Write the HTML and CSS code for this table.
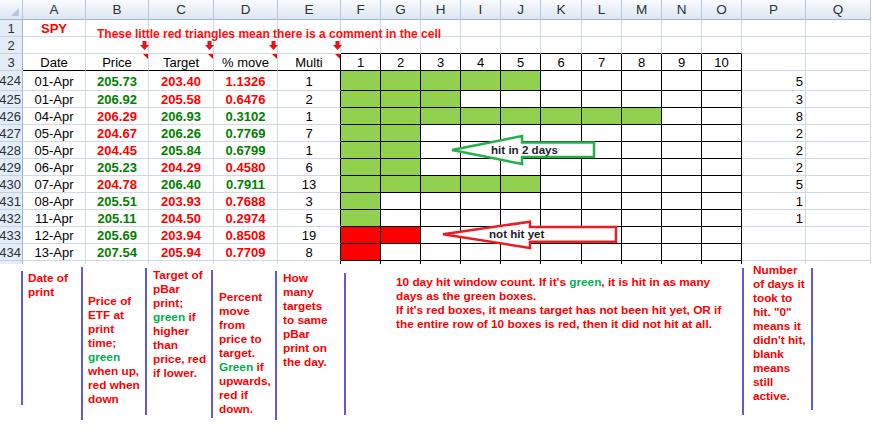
FILE: index.html
```html
<!DOCTYPE html>
<html>
<head>
<meta charset="utf-8">
<link rel="stylesheet" href="styles.css">
</head>
<body>
<div class="sheet">
  <div class="grid">
    <div class="ch corner"></div><div class="ch">A</div><div class="ch">B</div><div class="ch">C</div><div class="ch">D</div><div class="ch">E</div><div class="ch">F</div><div class="ch">G</div><div class="ch">H</div><div class="ch">I</div><div class="ch">J</div><div class="ch">K</div><div class="ch">L</div><div class="ch">M</div><div class="ch">N</div><div class="ch">O</div><div class="ch">P</div><div class="ch">Q</div><div class="x"></div>

    <div class="rh">1</div><div class="c spy">SPY</div><div class="c"></div><div class="c"></div><div class="c"></div><div class="c"></div><div class="c"></div><div class="c"></div><div class="c"></div><div class="c"></div><div class="c"></div><div class="c"></div><div class="c"></div><div class="c"></div><div class="c"></div><div class="c"></div><div class="c"></div><div class="c"></div><div class="x"></div>

    <div class="rh">2</div><div class="c"></div><div class="c"></div><div class="c"></div><div class="c"></div><div class="c"></div><div class="c tb"></div><div class="c tb"></div><div class="c tb"></div><div class="c tb"></div><div class="c tb"></div><div class="c tb"></div><div class="c tb"></div><div class="c tb"></div><div class="c tb"></div><div class="c tb"></div><div class="c"></div><div class="c"></div><div class="x"></div>

    <div class="rh">3</div><div class="c tb">Date</div><div class="c tb cm">Price</div><div class="c tb cm">Target</div><div class="c tb cm">% move</div><div class="c tb eb cm">Multi</div><div class="c box">1</div><div class="c box">2</div><div class="c box">3</div><div class="c box">4</div><div class="c box">5</div><div class="c box">6</div><div class="c box">7</div><div class="c box">8</div><div class="c box">9</div><div class="c box">10</div><div class="c"></div><div class="c"></div><div class="x"></div>

    <div class="rh rh-num">424</div><div class="c">01-Apr</div><div class="c b tg">205.73</div><div class="c b tr">203.40</div><div class="c b tr">1.1326</div><div class="c eb">1</div><div class="c box g"></div><div class="c box g"></div><div class="c box g"></div><div class="c box g"></div><div class="c box g"></div><div class="c box"></div><div class="c box"></div><div class="c box"></div><div class="c box"></div><div class="c box"></div><div class="c num">5</div><div class="c"></div><div class="x"></div>

    <div class="rh rh-num">425</div><div class="c">01-Apr</div><div class="c b tg">206.92</div><div class="c b tr">205.58</div><div class="c b tr">0.6476</div><div class="c eb">2</div><div class="c box g"></div><div class="c box g"></div><div class="c box g"></div><div class="c box"></div><div class="c box"></div><div class="c box"></div><div class="c box"></div><div class="c box"></div><div class="c box"></div><div class="c box"></div><div class="c num">3</div><div class="c"></div><div class="x"></div>

    <div class="rh rh-num">426</div><div class="c">04-Apr</div><div class="c b tr">206.29</div><div class="c b tg">206.93</div><div class="c b tg">0.3102</div><div class="c eb">1</div><div class="c box g"></div><div class="c box g"></div><div class="c box g"></div><div class="c box g"></div><div class="c box g"></div><div class="c box g"></div><div class="c box g"></div><div class="c box g"></div><div class="c box"></div><div class="c box"></div><div class="c num">8</div><div class="c"></div><div class="x"></div>

    <div class="rh rh-num">427</div><div class="c">05-Apr</div><div class="c b tr">204.67</div><div class="c b tg">206.26</div><div class="c b tg">0.7769</div><div class="c eb">7</div><div class="c box g"></div><div class="c box g"></div><div class="c box"></div><div class="c box"></div><div class="c box"></div><div class="c box"></div><div class="c box"></div><div class="c box"></div><div class="c box"></div><div class="c box"></div><div class="c num">2</div><div class="c"></div><div class="x"></div>

    <div class="rh rh-num">428</div><div class="c">05-Apr</div><div class="c b tr">204.45</div><div class="c b tg">205.84</div><div class="c b tg">0.6799</div><div class="c eb">1</div><div class="c box g"></div><div class="c box g"></div><div class="c box"></div><div class="c box"></div><div class="c box"></div><div class="c box"></div><div class="c box"></div><div class="c box"></div><div class="c box"></div><div class="c box"></div><div class="c num">2</div><div class="c"></div><div class="x"></div>

    <div class="rh rh-num">429</div><div class="c">06-Apr</div><div class="c b tg">205.23</div><div class="c b tr">204.29</div><div class="c b tr">0.4580</div><div class="c eb">6</div><div class="c box g"></div><div class="c box g"></div><div class="c box"></div><div class="c box"></div><div class="c box"></div><div class="c box"></div><div class="c box"></div><div class="c box"></div><div class="c box"></div><div class="c box"></div><div class="c num">2</div><div class="c"></div><div class="x"></div>

    <div class="rh rh-num">430</div><div class="c">07-Apr</div><div class="c b tr">204.78</div><div class="c b tg">206.40</div><div class="c b tg">0.7911</div><div class="c eb">13</div><div class="c box g"></div><div class="c box g"></div><div class="c box g"></div><div class="c box g"></div><div class="c box g"></div><div class="c box"></div><div class="c box"></div><div class="c box"></div><div class="c box"></div><div class="c box"></div><div class="c num">5</div><div class="c"></div><div class="x"></div>

    <div class="rh rh-num">431</div><div class="c">08-Apr</div><div class="c b tg">205.51</div><div class="c b tr">203.93</div><div class="c b tr">0.7688</div><div class="c eb">3</div><div class="c box g"></div><div class="c box"></div><div class="c box"></div><div class="c box"></div><div class="c box"></div><div class="c box"></div><div class="c box"></div><div class="c box"></div><div class="c box"></div><div class="c box"></div><div class="c num">1</div><div class="c"></div><div class="x"></div>

    <div class="rh rh-num">432</div><div class="c">11-Apr</div><div class="c b tg">205.11</div><div class="c b tr">204.50</div><div class="c b tr">0.2974</div><div class="c eb">5</div><div class="c box g"></div><div class="c box"></div><div class="c box"></div><div class="c box"></div><div class="c box"></div><div class="c box"></div><div class="c box"></div><div class="c box"></div><div class="c box"></div><div class="c box"></div><div class="c num">1</div><div class="c"></div><div class="x"></div>

    <div class="rh rh-num">433</div><div class="c">12-Apr</div><div class="c b tg">205.69</div><div class="c b tr">203.94</div><div class="c b tr">0.8508</div><div class="c eb">19</div><div class="c box r"></div><div class="c box r"></div><div class="c box"></div><div class="c box"></div><div class="c box"></div><div class="c box"></div><div class="c box"></div><div class="c box"></div><div class="c box"></div><div class="c box"></div><div class="c num"></div><div class="c"></div><div class="x"></div>

    <div class="rh rh-num">434</div><div class="c">13-Apr</div><div class="c b tg">207.54</div><div class="c b tr">205.94</div><div class="c b tr">0.7709</div><div class="c eb">8</div><div class="c box r"></div><div class="c box"></div><div class="c box"></div><div class="c box"></div><div class="c box"></div><div class="c box"></div><div class="c box"></div><div class="c box"></div><div class="c box"></div><div class="c box"></div><div class="c num"></div><div class="c"></div><div class="x"></div>

    <div class="rh st"></div><div class="c st"></div><div class="c st"></div><div class="c st"></div><div class="c st"></div><div class="c st eb"></div><div class="c st box"></div><div class="c st box"></div><div class="c st box"></div><div class="c st box"></div><div class="c st box"></div><div class="c st box"></div><div class="c st box"></div><div class="c st box"></div><div class="c st box"></div><div class="c st box"></div><div class="c st"></div><div class="c st"></div><div class="x"></div>
  </div>

  <div class="notes">
    <div class="note n1"><p>Date of<br>print</p></div>
    <div class="note n2"><p>Price of<br>ETF at<br>print<br>time;<br><span class="gr">green</span><br>when up,<br>red when<br>down</p></div>
    <div class="note n3"><p>Target of<br>pBar<br>print;<br><span class="gr">green</span> if<br>higher<br>than<br>price, red<br>if lower.</p></div>
    <div class="note n4"><p>Percent<br>move<br>from<br>price to<br>target.<br><span class="gr">Green</span> if<br>upwards,<br>red if<br>down.</p></div>
    <div class="note n5"><p>How<br>many<br>targets<br>to same<br>pBar<br>print on<br>the day.</p></div>
    <div class="note n6"><p>10 day hit window count. If it's <span class="gr">green</span>, it is hit in as many<br>days as the green boxes.<br>If it's red boxes, it means target has not been hit yet, OR if<br>the entire row of 10 boxes is red, then it did not hit at all.</p></div>
    <div class="note n7"><p>Number<br>of days it<br>took to<br>hit. "0"<br>means it<br>didn't hit,<br>blank<br>means<br>still<br>active.</p></div>
    <div class="note n8"></div>
  </div>

  <div class="callout">These little red triangles mean there is a comment in the cell</div>

  <svg class="down d1" width="9" height="9" viewBox="0 0 9 9"><polygon points="2.5,0 6.5,0 6.5,4 9,4 4.5,9 0,4 2.5,4" fill="#e81414"/></svg>
  <svg class="down d2" width="9" height="9" viewBox="0 0 9 9"><polygon points="2.5,0 6.5,0 6.5,4 9,4 4.5,9 0,4 2.5,4" fill="#e81414"/></svg>
  <svg class="down d3" width="9" height="9" viewBox="0 0 9 9"><polygon points="2.5,0 6.5,0 6.5,4 9,4 4.5,9 0,4 2.5,4" fill="#e81414"/></svg>
  <svg class="down d4" width="9" height="9" viewBox="0 0 9 9"><polygon points="2.5,0 6.5,0 6.5,4 9,4 4.5,9 0,4 2.5,4" fill="#e81414"/></svg>

  <div class="arrow arrow-green">
    <svg width="146" height="32" viewBox="0 0 146 32"><polygon points="2,16 72,2 72,8.5 144,8.5 144,23 72,23 72,30" fill="#fff" stroke="#22b14c" stroke-width="2.5"/></svg>
    <span class="arrow-text">hit in 2 days</span>
  </div>
  <div class="arrow arrow-red">
    <svg width="177" height="30" viewBox="0 0 177 30"><polygon points="2,14.3 89,1.7 89,7 175,7 175,21.7 89,21.7 89,28" fill="#fff" stroke="#ed1c24" stroke-width="2.5"/></svg>
    <span class="arrow-text">not hit yet</span>
  </div>
</div>
</body>
</html>
```

FILE: styles.css
```css
* { box-sizing: border-box; }
html, body { margin: 0; padding: 0; }
body {
  width: 875px;
  height: 432px;
  overflow: hidden;
  background: #fff;
  font-family: "Liberation Sans", Arial, sans-serif;
  color: #000;
}
.sheet { position: relative; width: 875px; height: 432px; }

.grid {
  display: grid;
  grid-template-columns: 23px 63px 63px 65px 64px 63px repeat(5, 40px) 41px repeat(4, 40px) 64px 65px 4px;
  grid-template-rows: 20px 17px 17px 17px 20px repeat(10, 17px) 3px;
}

.ch {
  background: linear-gradient(#f9fbfe, #dde6f2);
  border-right: 1px solid #b4c7dd;
  border-bottom: 1px solid #9eb6ce;
  font-size: 13.5px;
  color: #28313b;
  display: flex;
  align-items: center;
  justify-content: center;
}
.corner { position: relative; }
.corner::after {
  content: "";
  position: absolute;
  right: 3px;
  bottom: 3px;
  width: 0;
  height: 0;
  border-left: 8px solid transparent;
  border-bottom: 8px solid #b7c8de;
}

.rh {
  background: #e4ecf7;
  border-right: 1px solid #9eb6ce;
  border-bottom: 1px solid #c2d2e6;
  font-size: 13px;
  color: #28313b;
  display: flex;
  align-items: center;
  justify-content: center;
  overflow: hidden;
  white-space: nowrap;
}
.rh-num { justify-content: flex-end; padding-right: 1px; }

.c {
  position: relative;
  border-right: 1px solid #d0d7e5;
  border-bottom: 1px solid #d0d7e5;
  font-size: 13px;
  display: flex;
  align-items: center;
  justify-content: center;
  white-space: nowrap;
  padding-top: 1px;
}
.x { background: #fff; }
.st { border-bottom: none; }
.eb { border-right-color: #000; }
.tb { border-bottom-color: #000; }
.box { border-right-color: #000; border-bottom-color: #000; }
.g { background: #92d050; }
.r { background: #ff0000; }
.b { font-weight: bold; }
.tg { color: #008000; }
.tr { color: #ff0000; }
.num { justify-content: flex-end; padding-right: 2px; }
.spy { color: #ff0000; font-weight: bold; }
.cm::after {
  content: "";
  position: absolute;
  top: 0;
  right: 0;
  width: 0;
  height: 0;
  border-top: 5px solid #ff0000;
  border-left: 5px solid transparent;
}

.notes {
  display: grid;
  grid-template-columns: 60px 64px 66px 64px 69px 398px 69px 1fr;
  align-items: start;
  padding-left: 21px;
  height: 168px;
  font-size: 11.8px;
  font-weight: bold;
  line-height: 14px;
  color: #ff0000;
}
.note { border-left: 2px solid #5c5cdc; }
.note p { margin: 0; white-space: nowrap; }
.gr { color: #00b050; }
.n1 { margin-top: 7px; height: 134px; padding-left: 5px; }
.n2 { margin-top: 3px; height: 153px; padding-left: 5px; }
.n2 p { margin-top: 27px; }
.n3 { margin-top: 4px; height: 147px; padding-left: 6px; }
.n4 { margin-top: 6px; height: 148px; padding-left: 6px; }
.n4 p { margin-top: 20px; }
.n5 { margin-top: 7px; height: 149px; padding-left: 6px; }
.n6 { margin-top: 9px; height: 142px; padding-left: 50px; }
.n6 p { margin-top: 2px; }
.n7 { margin-top: 4px; height: 147px; padding-left: 9px; }
.n7 p { margin-top: -5px; }
.n8 { margin-top: 4px; height: 142px; }

.callout {
  position: absolute;
  left: 97px;
  top: 27px;
  font-size: 12px;
  line-height: 14px;
  font-weight: bold;
  color: #ff1010;
  white-space: nowrap;
}

.down { position: absolute; top: 41px; }
.d1 { left: 140px; }
.d2 { left: 205px; }
.d3 { left: 269px; }
.d4 { left: 333px; }

.arrow { position: absolute; }
.arrow svg { display: block; }
.arrow-green { left: 450px; top: 134px; width: 146px; height: 32px; }
.arrow-red { left: 441px; top: 220px; width: 177px; height: 30px; }
.arrow-text {
  position: absolute;
  font-size: 11.6px;
  line-height: 14px;
  font-weight: bold;
  color: #1c1c2c;
  white-space: nowrap;
}
.arrow-green .arrow-text { left: 41px; top: 9px; }
.arrow-red .arrow-text { left: 48px; top: 7px; }
```
